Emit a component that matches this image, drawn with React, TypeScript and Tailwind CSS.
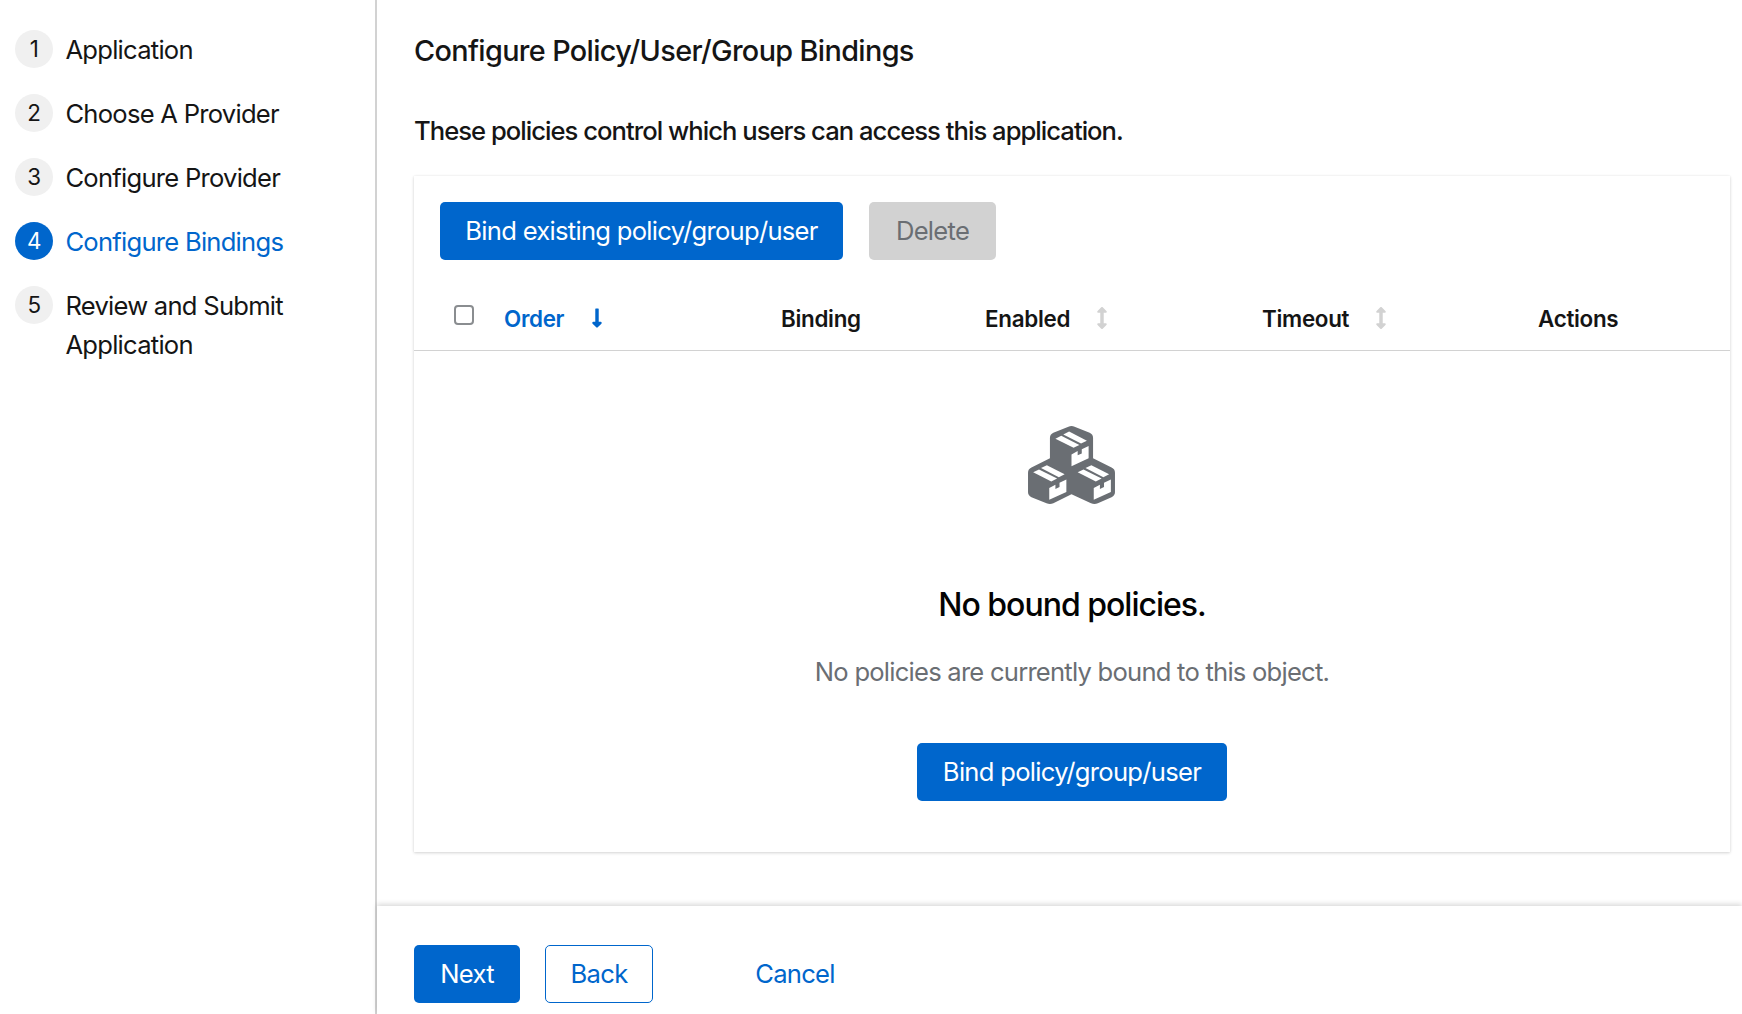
import React from "react";
import { FaArrowsAltV, FaLongArrowAltDown } from "react-icons/fa";

const steps = [
  { n: 1, label: "Application" },
  { n: 2, label: "Choose A Provider" },
  { n: 3, label: "Configure Provider" },
  { n: 4, label: "Configure Bindings", current: true },
  { n: 5, label: "Review and Submit Application" },
];

const font = { fontFamily: "Inter, 'Noto Sans', sans-serif" };

const Btn = ({ children, className }: { children: React.ReactNode; className: string }) => (
  <button className={`h-[58px] rounded-[5px] text-[25.6px] leading-none tracking-[-0.72px] ${className}`}>
    {children}
  </button>
);

const Th = ({ label, icon, className }: { label: string; icon?: React.ReactNode; className?: string }) => (
  <div className={`flex items-center text-[22.4px] font-semibold tracking-[-0.3px] ${className ?? "text-[#151515]"}`}>
    <span>{label}</span>
    {icon}
  </div>
);

// one box of the empty state icon: two tape strips on top, notched label on the side
const BoxFace = ({ x, y }: { x: number; y: number }) => (
  <g transform={`translate(${x} ${y})`} fill="#fff">
    <path d="M43 165 60 156 113 184 96 193Z" />
    <path d="M66 152 83 143 135 171 118 180Z" />
    <path d="M90 213 108 203V216L120 210V197L140 187V225L90 249Z" />
  </g>
);

const BoxesIcon = () => (
  <svg
    viewBox="25 20 260 245"
    preserveAspectRatio="none"
    className="mr-[1px] h-[80px] w-[89px]"
    aria-hidden="true"
  >
    <path
      fill="#6a6e73"
      d="M146 25Q155 21 164 25L208 44Q218 49 218 60V122L272 150Q282 155 282 166V226Q282 236 272 241L232 260Q222 264 212 260L155 232 102 260Q92 264 82 260L38 241Q28 236 28 226V166Q28 155 38 150L92 122V60Q92 49 102 44Z"
    />
    <BoxFace x={65} y={-103} />
    <BoxFace x={0} y={0} />
    <BoxFace x={130} y={0} />
  </svg>
);

export default function App() {
  return (
    <div className="flex h-screen overflow-hidden bg-white text-[#151515]" style={font}>
      <aside className="w-[377px] shrink-0 border-r-2 border-[#d2d2d2] pl-[15px] pr-[60px] pt-[30px]">
        <ol className="flex flex-col gap-[25px]">
          {steps.map((s) => (
            <li key={s.n} className="flex items-start gap-[12px]">
              <span
                className={`flex h-[38.4px] w-[38.4px] shrink-0 items-center justify-center rounded-full text-[22.4px] ${
                  s.current ? "bg-[#06c] text-white" : "bg-[#f0f0f0] text-[#151515]"
                }`}
              >
                {s.n}
              </span>
              <span
                className={`text-[25.6px] leading-[39px] tracking-[-0.75px] ${s.current ? "text-[#06c]" : ""}`}
              >
                {s.label}
              </span>
            </li>
          ))}
        </ol>
      </aside>

      <main className="flex min-w-0 flex-1 flex-col">
        <div className="flex-1 pl-[37px] pr-[12px] pt-[30px]">
          <h1 className="text-[28.8px] font-medium leading-[42px] tracking-[-0.63px]">
            Configure Policy/User/Group Bindings
          </h1>
          <p className="mt-[40px] text-[25.6px] font-medium leading-[38px] tracking-[-0.97px]">
            These policies control which users can access this application.
          </p>

          <section className="mt-[26px] bg-white shadow-[0_1px_3px_rgba(3,3,3,0.16),0_0_2px_rgba(3,3,3,0.06)]">
            <div className="flex gap-[26px] px-[26px] pt-[26px]">
              <Btn className="w-[403px] bg-[#06c] text-white">Bind existing policy/group/user</Btn>
              <Btn className="w-[127px] bg-[#d2d2d2] text-[#6a6e73]">Delete</Btn>
            </div>

            <div className="grid h-[91px] grid-cols-[90px_277px_204px_277px_276px_1fr] items-center border-b-[1.6px] border-[#d2d2d2] pt-[27px]">
              <div className="pl-[40px]">
                <input
                  type="checkbox"
                  aria-label="Select all"
                  className="mb-[7px] block h-[20px] w-[20px] appearance-none rounded-[4px] border-2 border-[#8a8d90] bg-white"
                />
              </div>
              <Th
                label="Order"
                className="text-[#06c]"
                icon={<FaLongArrowAltDown className="ml-[22px] h-[22px] w-[22px]" />}
              />
              <Th label="Binding" />
              <Th
                label="Enabled"
                icon={<FaArrowsAltV className="ml-[21px] h-[22px] w-[22px] text-[#d2d2d2]" />}
              />
              <Th
                label="Timeout"
                icon={<FaArrowsAltV className="ml-[21px] h-[22px] w-[22px] text-[#d2d2d2]" />}
              />
              <Th label="Actions" />
            </div>

            <div className="flex flex-col items-center pb-[51px] pt-[74px]">
              <BoxesIcon />
              <h2 className="mt-[80px] text-[32px] font-medium leading-[40px] tracking-[-1px] text-[#030303]">
                No bound policies.
              </h2>
              <p className="mt-[28px] text-[25.6px] leading-[38px] tracking-[-0.77px] text-[#6a6e73]">
                No policies are currently bound to this object.
              </p>
              <Btn className="mt-[52px] w-[310px] bg-[#06c] text-white">Bind policy/group/user</Btn>
            </div>
          </section>
        </div>

        <footer className="flex h-[108px] shrink-0 items-start pl-[37px] pt-[39px] shadow-[0_-2px_5px_rgba(3,3,3,0.15)]">
          <Btn className="w-[106px] bg-[#06c] text-white">Next</Btn>
          <Btn className="ml-[25px] w-[108px] border border-[#06c] bg-white text-[#06c]">Back</Btn>
          <Btn className="ml-[79px] w-[126px] bg-white text-[#06c]">Cancel</Btn>
        </footer>
      </main>
    </div>
  );
}
